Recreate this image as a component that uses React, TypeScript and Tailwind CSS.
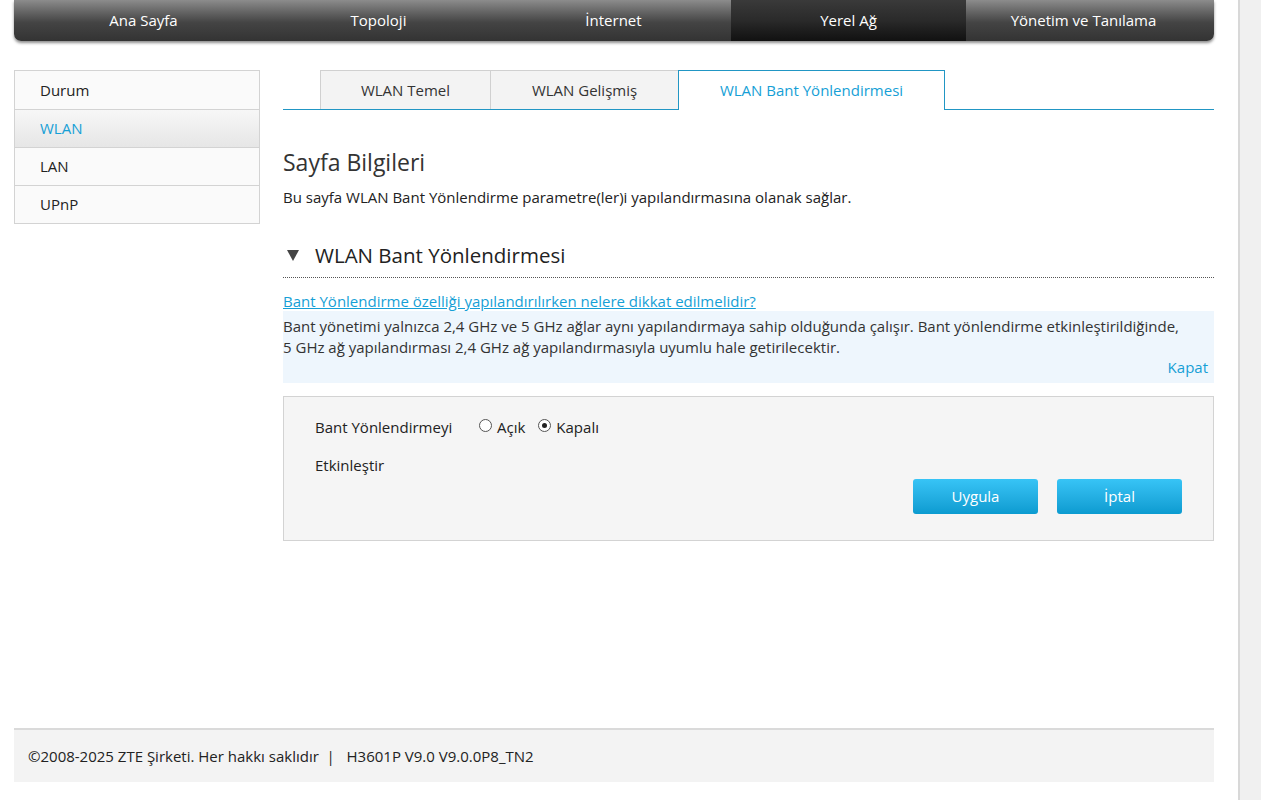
import React from 'react'

const navItems = ['Ana Sayfa', 'Topoloji', 'İnternet', 'Yerel Ağ', 'Yönetim ve Tanılama']
const sideItems = ['Durum', 'WLAN', 'LAN', 'UPnP']
const tabs = ['WLAN Temel', 'WLAN Gelişmiş', 'WLAN Bant Yönlendirmesi']

function Radio({ checked }: { checked: boolean }) {
  return (
    <span className="mt-[-3px] inline-flex h-[13px] w-[13px] items-center justify-center rounded-full border border-[#555] bg-white">
      {checked && <span className="h-[5px] w-[5px] rounded-full bg-[#222]" />}
    </span>
  )
}

export default function App() {
  return (
    <div className="flex min-h-[800px] bg-white font-['Open_Sans',sans-serif] text-[#333]">
      <div className="w-[1238px] shrink-0 pl-[14px]">
        <div className="w-[1200px]">
          {/* üst menü */}
          <div className="flex h-[41px] rounded-b-[7px] bg-gradient-to-b from-[#8c8c8c] via-[#444] via-55% to-[#333] pl-[12px] shadow-[0_2px_3px_rgba(0,0,0,0.45)]">
            {navItems.map((n, i) => (
              <div
                key={n}
                className={
                  'flex w-[235px] items-center justify-center text-[15px] text-white ' +
                  (i === 3 ? 'bg-gradient-to-b from-[#3a3a3a] via-[#2a2a2a] to-[#111]' : '')
                }
              >
                {n}
              </div>
            ))}
          </div>

          <div className="mt-[29px] flex gap-[23px]">
            {/* sol menü */}
            <div className="w-[246px] shrink-0">
              <div className="border border-[#d3d3d3] bg-[#fafafa]">
                {sideItems.map((s, i) => (
                  <div
                    key={s}
                    className={
                      'flex h-[38px] items-center pl-[25px] text-[15px] ' +
                      (i > 0 ? 'border-t border-[#d3d3d3] ' : '') +
                      (i === 1 ? 'bg-gradient-to-b from-[#f7f7f7] to-[#e6e6e6] text-[#169fd6]' : 'text-[#222]')
                    }
                  >
                    {s}
                  </div>
                ))}
              </div>
            </div>

            {/* içerik */}
            <div className="flex-1">
              <div className="flex h-[40px] border-b border-[#2196c4] pl-[37px]">
                {tabs.map((t, i) => (
                  <div
                    key={t}
                    className={
                      i === 2
                        ? 'mb-[-1px] flex w-[267px] items-center justify-center border border-b-0 border-[#2196c4] bg-white text-[15px] text-[#169fd6]'
                        : 'flex items-center justify-center border border-b-0 border-r-0 border-[#d0d0d0] bg-[#f3f3f3] text-[15px] text-[#333] ' +
                          (i === 0 ? 'w-[170px]' : 'w-[188px]')
                    }
                  >
                    {t}
                  </div>
                ))}
              </div>

              <div className="mt-[37px] text-[23px] leading-[30px] text-[#333]">Sayfa Bilgileri</div>
              <div className="mt-[10px] text-[15px] leading-[20px] text-[#222]">
                Bu sayfa WLAN Bant Yönlendirme parametre(ler)i yapılandırmasına olanak sağlar.
              </div>

              <div className="mt-[30px] flex h-[41px] items-center border-b border-dotted border-[#555] pb-[4px]">
                <svg className="ml-[4px] mr-[16px]" width="12" height="11" viewBox="0 0 12 11">
                  <polygon points="0,0 12,0 6,11" fill="#444" />
                </svg>
                <span className="text-[20.5px] text-[#222]">WLAN Bant Yönlendirmesi</span>
              </div>

              <div className="mt-[13px] text-[15px] leading-[20px] text-[#169fd6] underline">
                Bant Yönlendirme özelliği yapılandırılırken nelere dikkat edilmelidir?
              </div>
              <div className="bg-[#eef6fd] pt-[5px] pb-[7px] text-[15px] leading-[21px] text-[#333]">
                <div>
                  Bant yönetimi yalnızca 2,4 GHz ve 5 GHz ağlar aynı yapılandırmaya sahip olduğunda çalışır. Bant yönlendirme etkinleştirildiğinde,
                  <br />
                  5 GHz ağ yapılandırması 2,4 GHz ağ yapılandırmasıyla uyumlu hale getirilecektir.
                </div>
                <div className="pr-[6px] text-right leading-[18px] text-[#169fd6]">Kapat</div>
              </div>

              <div className="mt-[13px] h-[145px] border border-[#d3d3d3] bg-[#f5f5f5] pl-[31px] pr-[31px]">
                <div className="mt-[20px] flex text-[15px] leading-[20px]">
                  <div className="w-[164px] text-[#222]">
                    Bant Yönlendirmeyi
                    <div className="mt-[18px]">Etkinleştir</div>
                  </div>
                  <div className="flex h-[20px] items-center gap-[5px] text-[#222]">
                    <Radio checked={false} />
                    <span className="mr-[8px]">Açık</span>
                    <Radio checked />
                    <span>Kapalı</span>
                  </div>
                </div>
                <div className="mt-[4px] flex justify-end gap-[19px]">
                  {['Uygula', 'İptal'].map((b) => (
                    <div
                      key={b}
                      className="flex h-[35px] w-[125px] items-center justify-center rounded-[3px] bg-gradient-to-b from-[#37c4f6] to-[#0a9bd0] text-[15px] text-white"
                    >
                      {b}
                    </div>
                  ))}
                </div>
              </div>
            </div>
          </div>

          <div className="mt-[187px] flex h-[54px] items-center border-t-2 border-[#dadada] bg-[#f3f3f3] pl-[14px] text-[15px] text-[#222]">
            ©2008-2025 ZTE Şirketi. Her hakkı saklıdır&nbsp;&nbsp;|&nbsp;&nbsp;&nbsp;H3601P V9.0 V9.0.0P8_TN2
          </div>
        </div>
      </div>
      <div className="flex-1 border-l-2 border-[#d8d8d8] bg-[#f0f0f0]" />
    </div>
  )
}
